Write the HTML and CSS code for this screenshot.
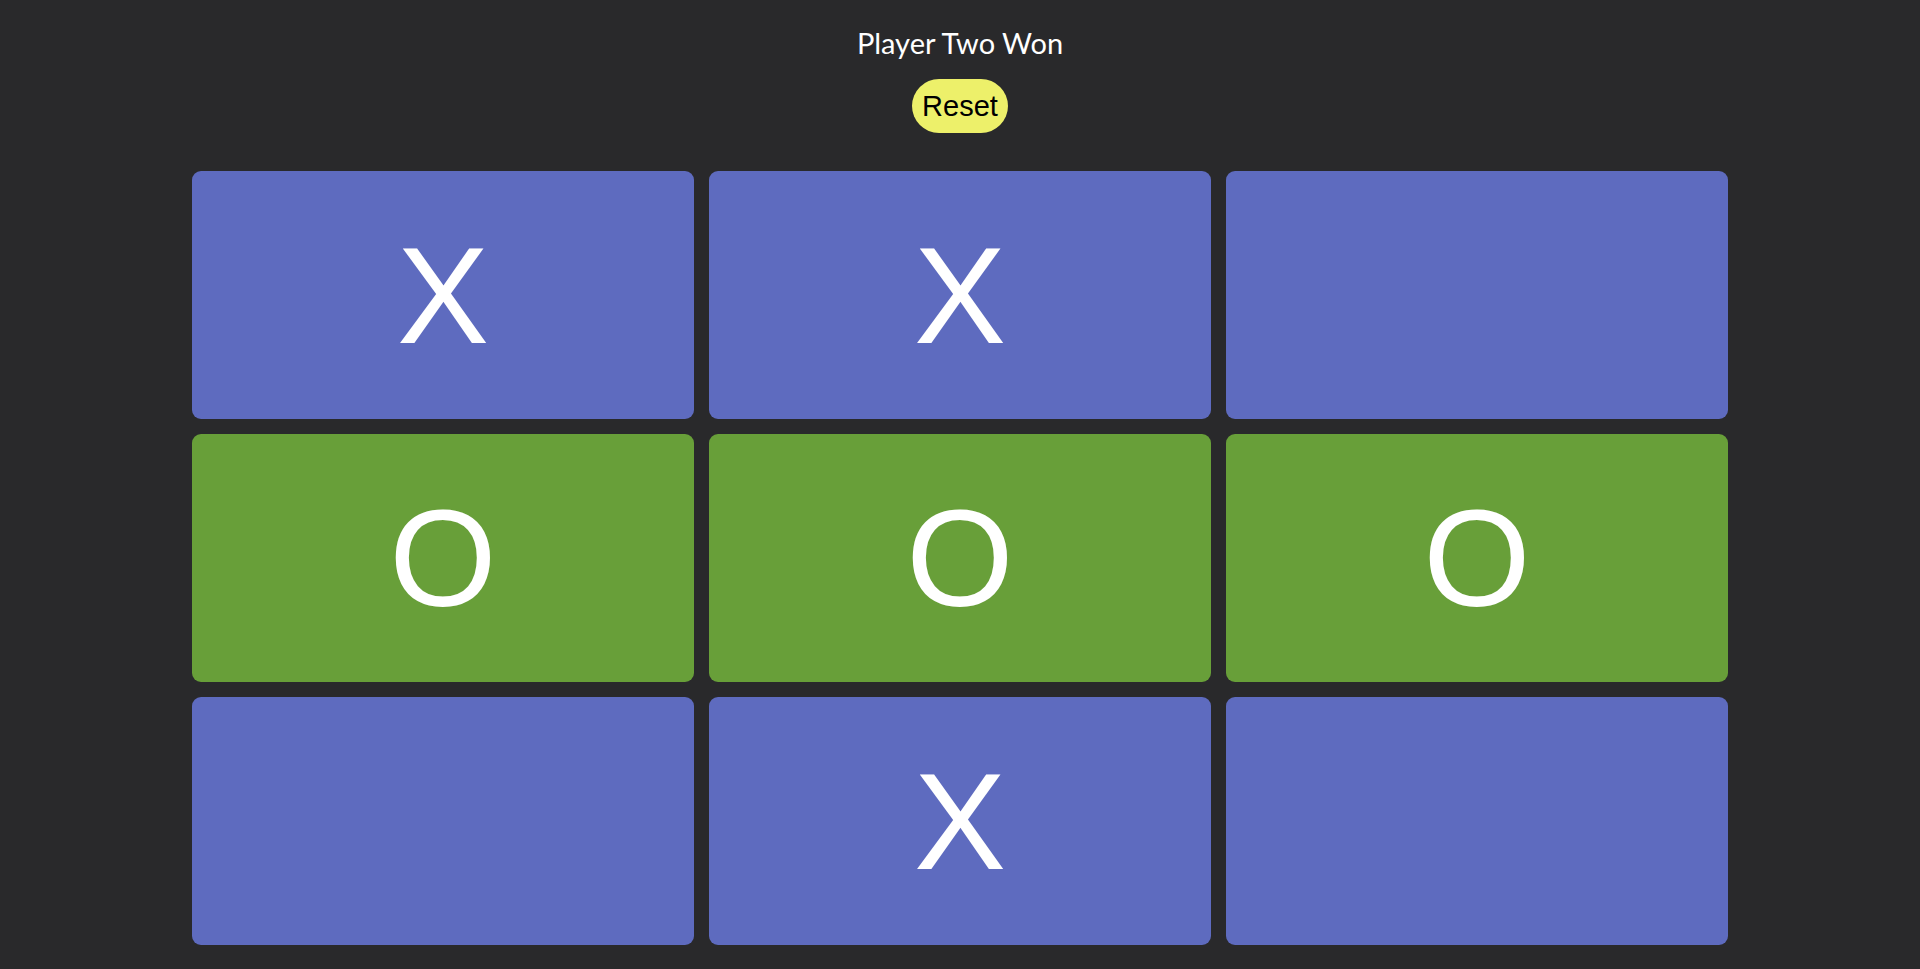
FILE: index.html
```html
<!DOCTYPE html>
<html lang="en">
<head>
<meta charset="utf-8">
<title>Tic Tac Toe</title>
<link rel="stylesheet" href="styles.css">
</head>
<body>
<main class="game">
  <h1 class="status">Player Two Won</h1>
  <button class="reset" type="button">Reset</button>
  <div class="board">
    <div class="cell">X</div>
    <div class="cell">X</div>
    <div class="cell"></div>
    <div class="cell win">O</div>
    <div class="cell win">O</div>
    <div class="cell win">O</div>
    <div class="cell"></div>
    <div class="cell">X</div>
    <div class="cell"></div>
  </div>
</main>
</body>
</html>
```

FILE: styles.css
```css
html, body {
  margin: 0;
  padding: 0;
  background: #29292b;
  height: 100%;
  overflow: hidden;
}

.game {
  display: flex;
  flex-direction: column;
  align-items: center;
  padding-top: 25px;
}

.status {
  margin: 0;
  font-family: Lato, "Liberation Sans", sans-serif;
  font-weight: 400;
  font-size: 29px;
  line-height: 35px;
  color: #ffffff;
}

.reset {
  margin-top: 19px;
  font-family: "Liberation Sans", Arial, sans-serif;
  font-size: 29px;
  line-height: 34px;
  padding: 10px 10px;
  border: none;
  border-radius: 27px;
  background: #edf06a;
  color: #000000;
  cursor: pointer;
}

.board {
  margin-top: 38px;
  width: 1536px;
  height: 774px;
  display: grid;
  grid-template-columns: repeat(3, 1fr);
  grid-template-rows: repeat(3, 1fr);
  gap: 15px;
}

.cell {
  display: flex;
  align-items: center;
  justify-content: center;
  background: #5e6bbf;
  border-radius: 9px;
  color: #ffffff;
  font-family: "Liberation Sans", Arial, sans-serif;
  font-size: 138px;
  line-height: 1;
}

.cell.win {
  background: #689f39;
}
```
